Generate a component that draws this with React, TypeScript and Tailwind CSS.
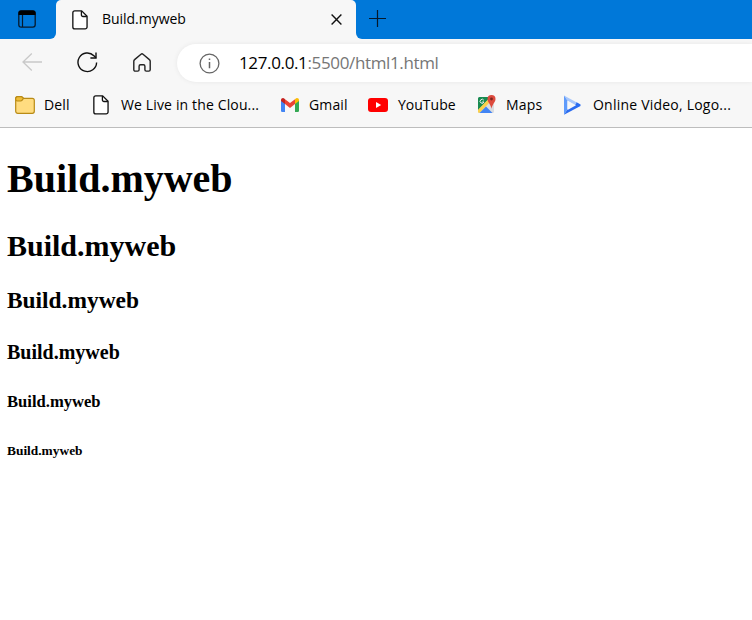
import React from "react";

const uiFont = "font-['Open_Sans','Noto_Sans',sans-serif]";

function PageIcon() {
  return (
    <svg width="16" height="20" viewBox="0 0 17 21" fill="#fff" stroke="#111" strokeWidth="1.4" strokeLinejoin="round" className="block shrink-0">
      <path d="M3 .8h7.3L16 6.5v11.4a2.1 2.1 0 0 1-2.1 2.1H3A2.1 2.1 0 0 1 .9 17.9v-15A2.1 2.1 0 0 1 3 .8Z" />
      <path d="M10 1v4.2a1.6 1.6 0 0 0 1.6 1.6h4.2" fill="none" />
    </svg>
  );
}

function TabBar() {
  return (
    <div className="flex h-[39px] bg-[#0078d9]">
      <div className="w-14 bg-[#f7f7f7]">
        <div className="flex h-[39px] items-center rounded-br-[6px] bg-[#0078d9] pl-[18px]">
          <svg width="18" height="18" viewBox="0 0 18 18" className="mt-[-1px] block">
            <rect x=".8" y=".8" width="16.4" height="16.4" rx="2.4" fill="none" stroke="#06192b" strokeWidth="1.3" />
            <path d="M.5 5V3A2.5 2.5 0 0 1 3 .5h12A2.5 2.5 0 0 1 17.500 3v2Z" fill="#000" />
            <path d="M4.500 5v12" stroke="#06192b" strokeWidth="1.2" />
          </svg>
        </div>
      </div>
      <div className="flex h-[39px] w-[300px] items-center rounded-t-[5px] bg-[#f7f7f7] pl-4">
        <PageIcon />
        <span className="ml-[14px] mt-[-2px] w-[229px] text-[14px] leading-5 tracking-[-0.03px] text-black">Build.myweb</span>
        <svg width="11" height="11" viewBox="0 0 11 11" stroke="#111" strokeWidth="1.4" className="block">
          <path d="M.6.6l9.8 9.800M10.400.6.6 10.400" />
        </svg>
      </div>
      <div className="w-[396px] bg-[#f7f7f7]">
        <div className="flex h-[39px] items-center rounded-bl-[6px] bg-[#0078d9] pl-[13px]">
          <svg width="17" height="17" viewBox="0 0 17 17" stroke="#06192b" strokeWidth="1.2" className="mt-[-2px] block">
            <path d="M8.500 0v17M0 8.500h17" />
          </svg>
        </div>
      </div>
    </div>
  );
}

function Toolbar() {
  return (
    <div className="flex h-[46px] items-start">
      <svg width="20" height="18" viewBox="0 0 20 18" fill="none" stroke="#c9c9c9" strokeWidth="1.300" className="ml-[22px] mt-[14px] block shrink-0">
        <path d="M9.800.5 1 9l8.800 8.500M1 9h19" />
      </svg>
      <svg width="21" height="21" viewBox="0 0 21 21" fill="none" stroke="#111" strokeWidth="1.400" className="ml-[35px] mt-[13px] block shrink-0">
        <path d="M19.600 10.500a9.300 9.300 0 1 1-2.700-6.800L19 5.800" />
        <path d="M19 .6v5.400h-5.600" />
      </svg>
      <svg width="18" height="19" viewBox="0 0 18 19" fill="none" stroke="#222" strokeWidth="1.400" strokeLinejoin="round" className="ml-[35px] mt-[14px] block shrink-0">
        <path d="M.8 8.300c0-.7.3-1.300.8-1.700L8 1.200c.6-.5 1.400-.5 2 0l6.400 5.400c.5.400.8 1 .8 1.700v8.400c0 .8-.6 1.400-1.400 1.400h-2.500c-.8 0-1.400-.6-1.400-1.400v-3.500c0-.8-.6-1.400-1.400-1.400h-3c-.8 0-1.400.6-1.400 1.400v3.500c0 .8-.6 1.400-1.400 1.400H2.200c-.8 0-1.400-.6-1.400-1.400Z" />
      </svg>
      <div className="ml-[26px] mt-[5px] flex h-[38px] grow items-center rounded-l-full bg-white pl-[22px] shadow-[0_0_5px_rgba(0,0,0,0.07)]">
        <svg width="21" height="21" viewBox="0 0 21 21" fill="none" stroke="#666" strokeWidth="1.300" className="block">
          <circle cx="10.500" cy="10.500" r="9.400" />
          <path d="M10.500 9v6.300M10.500 5.500v1.600" strokeWidth="1.500" />
        </svg>
        <span className="ml-[19px] whitespace-nowrap text-[17px] leading-6 tracking-[-0.36px] text-black">
          127.0.0.1<span className="text-[#767676]">:5500/html1.html</span>
        </span>
      </div>
    </div>
  );
}

function Bookmarks() {
  return (
    <div className="flex h-[43px] items-center whitespace-nowrap border-b border-[#bdbdbd] pb-[3px] text-[14px] leading-5 text-black">
      <div className="flex w-[78px] shrink-0 items-center pl-[15px]">
        <svg width="20" height="18" viewBox="0 0 20 18" stroke="#b98b16" strokeWidth="1.200" className="block">
          <path d="M.7 2.500A1.800 1.800 0 0 1 2.500.7h3.600c.6 0 1 .2 1.400.6l1 1h8.800a2 2 0 0 1 2 2v11a2 2 0 0 1-2 2H2.700a2 2 0 0 1-2-2Z" fill="#ffdc80" />
          <path d="M.7 2.500A1.800 1.800 0 0 1 2.500.7h3.600c.6 0 1 .2 1.400.6l1 1-1.500 2c-.3.500-.8.700-1.400.7H2.300A1.600 1.600 0 0 1 .7 3.500Z" fill="#efbd37" />
        </svg>
        <span className="ml-[9px] tracking-[0.15px]">Dell</span>
      </div>
      <div className="flex w-[188px] shrink-0 items-center pl-[15px]">
        <PageIcon />
        <span className="ml-[12px] tracking-[0.14px]">We Live in the Clou...</span>
      </div>
      <div className="flex w-[88px] shrink-0 items-center pl-[15px]">
        <svg width="18" height="14" viewBox="0 0 18 14" className="block">
          <path d="M0 3h4v11H1.300A1.300 1.300 0 0 1 0 12.700Z" fill="#4285f4" />
          <path d="M14 3h4v9.700a1.300 1.300 0 0 1-1.300 1.300H14Z" fill="#34a853" />
          <path d="M4 1.200 9 5l5-3.800V6L9 10 4 6Z" fill="#ea4335" />
          <path d="M0 2C0 .2 2.200-.6 3.500.7L4 1.200V6L0 3Z" fill="#c5221f" />
          <path d="M18 2c0-1.800-2.200-2.600-3.500-1.300l-.5.500V6l4-3Z" fill="#fbbc04" />
        </svg>
        <span className="ml-[10px] tracking-[0.15px]">Gmail</span>
      </div>
      <div className="flex w-[108px] shrink-0 items-center pl-[14px]">
        <svg width="20" height="14" viewBox="0 0 20 14" className="block">
          <rect width="20" height="14" rx="3" fill="#f00" />
          <path d="M8 4v6l5.200-3Z" fill="#fff" />
        </svg>
        <span className="ml-[10px]">YouTube</span>
      </div>
      <div className="flex w-[87px] shrink-0 items-center pl-[15px]">
        <svg width="19" height="19" viewBox="0 0 19 19" className="block">
          <path d="M2.500 2H14l3 8v6.500A1.500 1.500 0 0 1 15.500 18h-13A1.500 1.500 0 0 1 1 16.500v-13A1.500 1.500 0 0 1 2.500 2Z" fill="#dadce0" />
          <path d="M2.500 2h11L1 15.500v-12A1.500 1.500 0 0 1 2.500 2Z" fill="#188b51" />
          <path d="M1 14.800 13 2.500l1.500 3L2.500 18A1.500 1.500 0 0 1 1 16.500Z" fill="#fbd04b" />
          <path d="M2.500 18 9 11.500l6.500 6.500Z" fill="#4285f4" />
          <path d="M14.500 0a4 4 0 0 1 4 4c0 3.500-3.200 4.800-4 9.800-.8-5-4-6.300-4-9.800a4 4 0 0 1 4-4Z" fill="#dd4b3e" />
          <circle cx="14.500" cy="4" r="1.400" fill="#7d241e" />
          <path d="M6.800 5.200A2 2 0 1 0 7 7H5.200" fill="none" stroke="#eee" strokeWidth="1" />
        </svg>
        <span className="ml-[10px] tracking-[0.15px]">Maps</span>
      </div>
      <div className="flex shrink-0 items-center pl-[15px]">
        <svg width="17" height="20" viewBox="0 0 17 20" className="block">
          <path d="M0 .4 16.500 9.500l-3.500 2L3.500 5.800Z" fill="#a9c8fb" />
          <path d="M0 .4 3.500 5.800v8.400L0 19.800Z" fill="#5f9bfb" />
          <path d="M0 19.800 3.500 14.200 12 9.200l.5-1.900 4 2.200v1.400Z" fill="#2b6cf0" />
          <path d="M3.500 5.800 12 10.200 3.500 15Z" fill="#f7f7f7" />
        </svg>
        <span className="ml-[12px] tracking-[0.22px]">Online Video, Logo...</span>
      </div>
    </div>
  );
}

export default function App() {
  return (
    <div className="h-[620px] w-[752px] overflow-hidden bg-white">
      <header className={`bg-[#f7f7f7] ${uiFont}`}>
        <TabBar />
        <Toolbar />
        <Bookmarks />
      </header>
      <main className="pl-[7px] pt-[28px] font-['Liberation_Serif',serif] text-black">
        <h1 className="text-[40px] font-bold leading-[46px]">Build.myweb</h1>
        <h2 className="mt-[27px] text-[30px] font-bold leading-[34px]">Build.myweb</h2>
        <h3 className="mt-[24px] text-[23.4px] font-bold leading-[26px]">Build.myweb</h3>
        <h4 className="mt-[28px] text-[20px] font-bold leading-[22px]">Build.myweb</h4>
        <h5 className="mt-[30px] text-[16.6px] font-bold leading-[18px]">Build.myweb</h5>
        <h6 className="mt-[32px] text-[13.4px] font-bold leading-4">Build.myweb</h6>
      </main>
    </div>
  );
}
